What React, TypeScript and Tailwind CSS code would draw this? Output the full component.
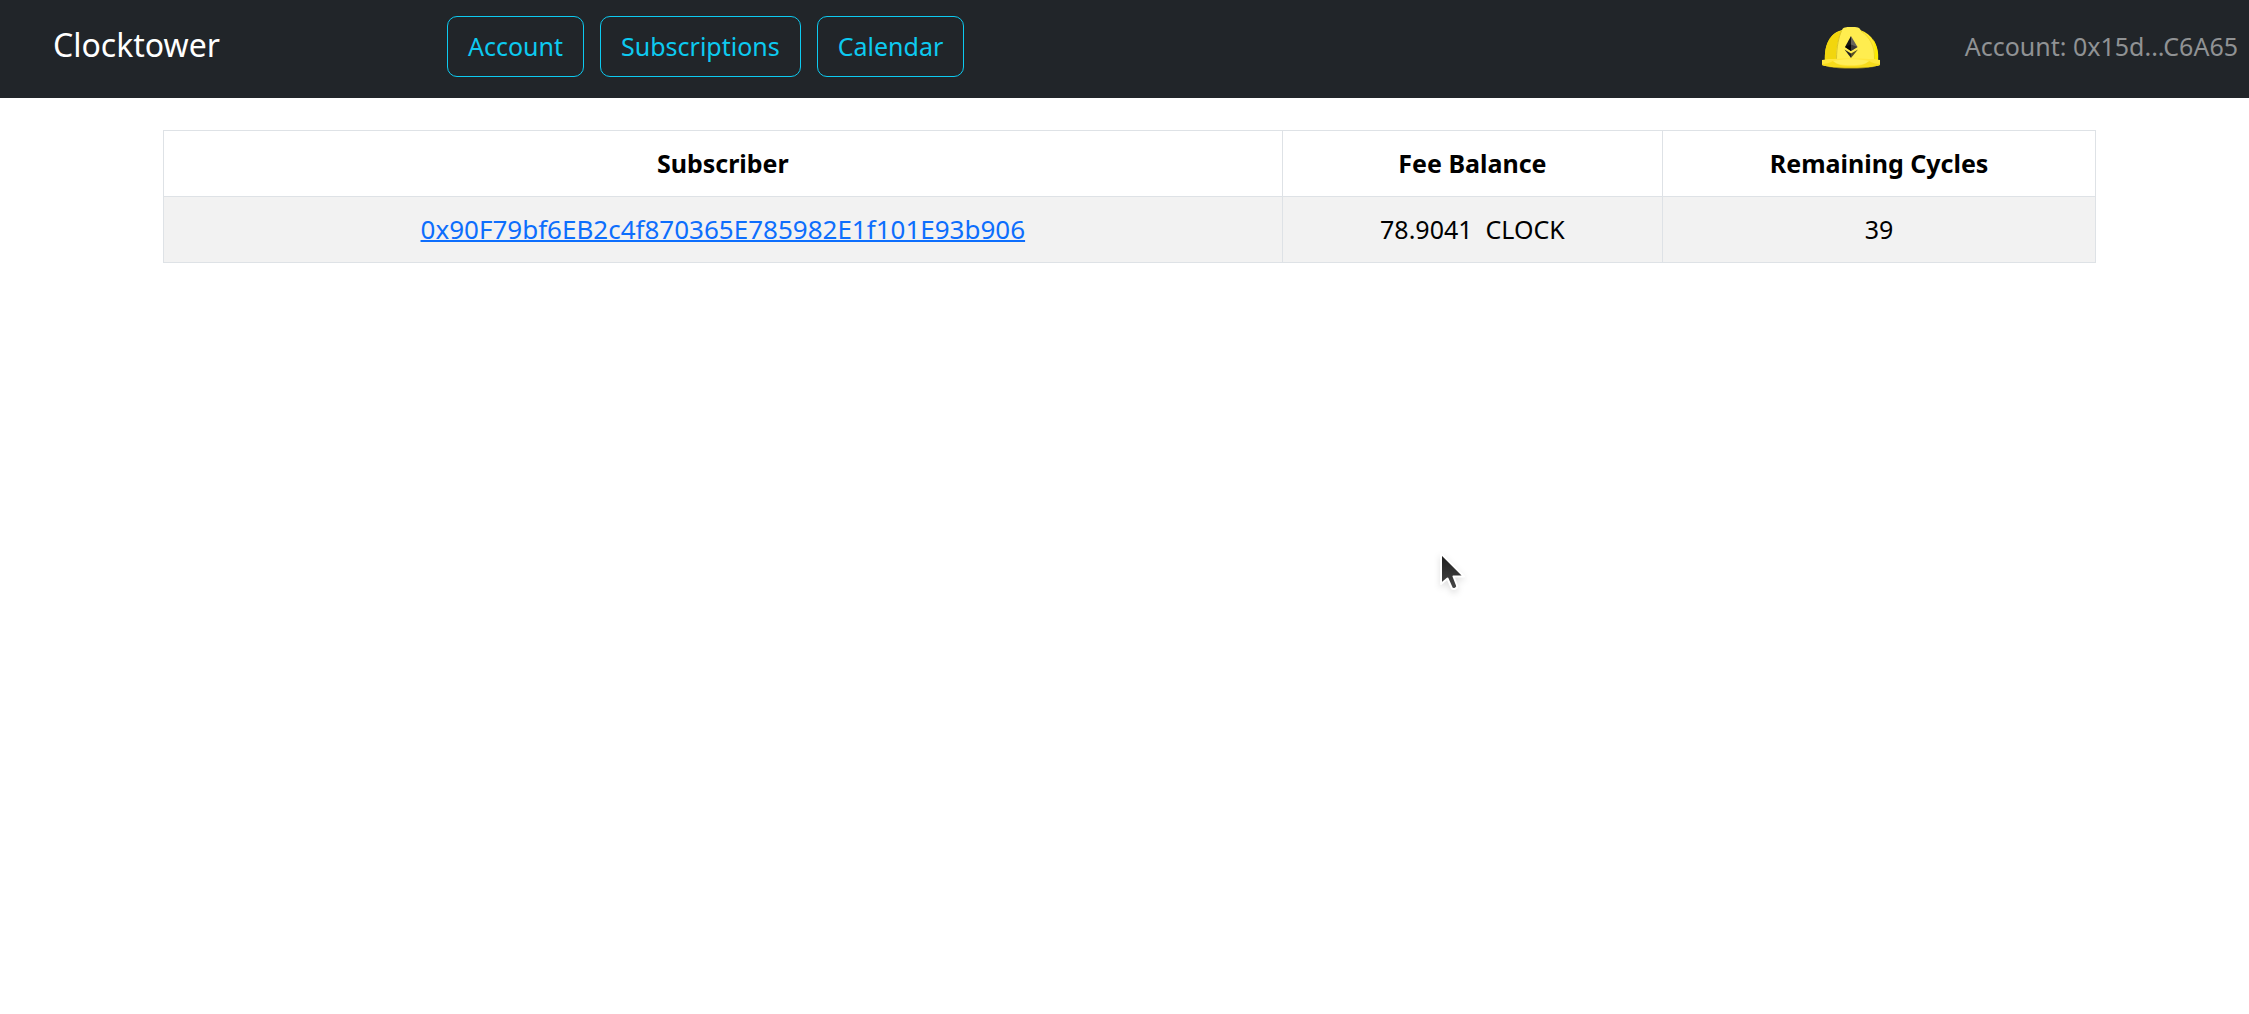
const navItems = ["Account", "Subscriptions", "Calendar"];

const rows = [
  {
    subscriber: "0x90F79bf6EB2c4f870365E785982E1f101E93b906",
    balance: "78.9041\u00a0\u00a0CLOCK",
    cycles: 39,
  },
];

function HardHat() {
  return (
    <svg viewBox="0 0 58 42" className="h-[42px] w-[58px] shrink-0" role="img" aria-label="Hard hat">
      <path d="M3 34C2 18 8 6 20 3L38 3C50 7 57 18 56 34Z" fill="#ffe92e" />
      <path d="M3 34C2 18 8 6 19 4C16 13 14 22 14 34Z" fill="#f2d60d" />
      <path d="M51 12C55 18 57 25 56 34H52C53 25 53 18 51 12Z" fill="#fcea00" />
      <path d="M14 33C14 20 17 8 20 3C21 0 24 0 29 0C35 0 38 0 39 4C48 10 53 20 52 33Z" fill="#ffed4f" />
      <path d="M14.500 32C14.500 20 17 9 19.500 4" fill="none" stroke="#c9b21c" strokeWidth=".7" />
      <path d="M39 4C48 10 53 20 52.500 32" fill="none" stroke="#e2cc27" strokeWidth=".6" />
      <path d="M0 33C8 31 50 31 58 33V38C48 42 10 42 0 38Z" fill="#ffe63c" />
      <path d="M0 37C4 37 8 36 11 34C15 38 20 39 29 39C38 39 43 38 47 34C50 36 54 37 58 37V38C48 42 10 42 0 38Z" fill="#f7db1b" />
      <path d="M11 34C20 31.500 38 31.500 47 34C42 38 37 38 29 38C21 38 16 38 11 34Z" fill="#ffee58" />
      <path d="M6 40C20 42 38 42 52 40C40 41 18 41 6 40Z" fill="#b39f13" />
      <path d="M29 9L23 20L29 24Z" fill="#151515" />
      <path d="M29 9L35.500 20L29 24Z" fill="#66635b" />
      <path d="M23 20L29 17.500V24Z" fill="#050505" />
      <path d="M35.500 20L29 17.500V24Z" fill="#3b3937" />
      <path d="M22.500 22.500L29 26.500V31Z" fill="#222" />
      <path d="M36 22.500L29 26.500V31Z" fill="#575026" />
    </svg>
  );
}

function Pointer() {
  return (
    <svg
      viewBox="0 0 28 42"
      aria-hidden="true"
      className="pointer-events-none absolute top-[551px] left-[1438px] h-[42px] w-7 drop-shadow-md"
    >
      <defs>
        <linearGradient id="pointer-fill" x1="0" y1="0" x2="0" y2="1">
          <stop offset="0" stopColor="#1c1c1c" />
          <stop offset="1" stopColor="#484848" />
        </linearGradient>
      </defs>
      <path
        d="M3 2.500V33L9.500 27.500L13.500 36.500C15 39.500 20 37.500 19 34.500L15.500 25.500H26Z"
        fill="url(#pointer-fill)"
        stroke="#fff"
        strokeWidth="2"
        strokeLinejoin="round"
      />
    </svg>
  );
}

export default function App() {
  return (
    <div className="relative min-h-screen bg-white font-['Noto_Sans','Open_Sans',sans-serif] text-[25px] leading-[39px] text-black">
      <header className="flex items-start bg-[#212529] pt-4 pr-[11px] pb-[21px] pl-[53px]">
        <a href="#" className="w-[394px] shrink-0 pt-[9px] text-[32px] text-white">
          Clocktower
        </a>
        <nav className="flex gap-4">
          {navItems.map((item) => (
            <button
              key={item}
              type="button"
              className="cursor-pointer rounded-[10px] border border-[#0dcaf0] px-5 py-[10px] text-[#0dcaf0]"
            >
              {item}
            </button>
          ))}
        </nav>
        <div className="ml-auto flex items-start gap-[85px] pt-[11px]">
          <HardHat />
          <span className="text-[#909294]">Account: 0x15d...C6A65</span>
        </div>
      </header>
      <main className="pt-8 pr-[153px] pl-[163px]">
        <table className="w-full table-fixed border-collapse text-center">
          <thead>
            <tr>
              <th className="w-[57.9%] border border-[#dee2e6] py-[13px] font-bold">Subscriber</th>
              <th className="w-[19.7%] border border-[#dee2e6] py-[13px] font-bold">Fee Balance</th>
              <th className="w-[22.4%] border border-[#dee2e6] py-[13px] font-bold">Remaining Cycles</th>
            </tr>
          </thead>
          <tbody>
            {rows.map((row) => (
              <tr key={row.subscriber} className="bg-[#f2f2f2]">
                <td className="border border-[#dee2e6] py-[13px]">
                  <a href="#" className="text-[26px] text-[#0d6efd] underline decoration-2">
                    {row.subscriber}
                  </a>
                </td>
                <td className="border border-[#dee2e6] py-[13px]">{row.balance}</td>
                <td className="border border-[#dee2e6] py-[13px]">{row.cycles}</td>
              </tr>
            ))}
          </tbody>
        </table>
      </main>
      <Pointer />
    </div>
  );
}
